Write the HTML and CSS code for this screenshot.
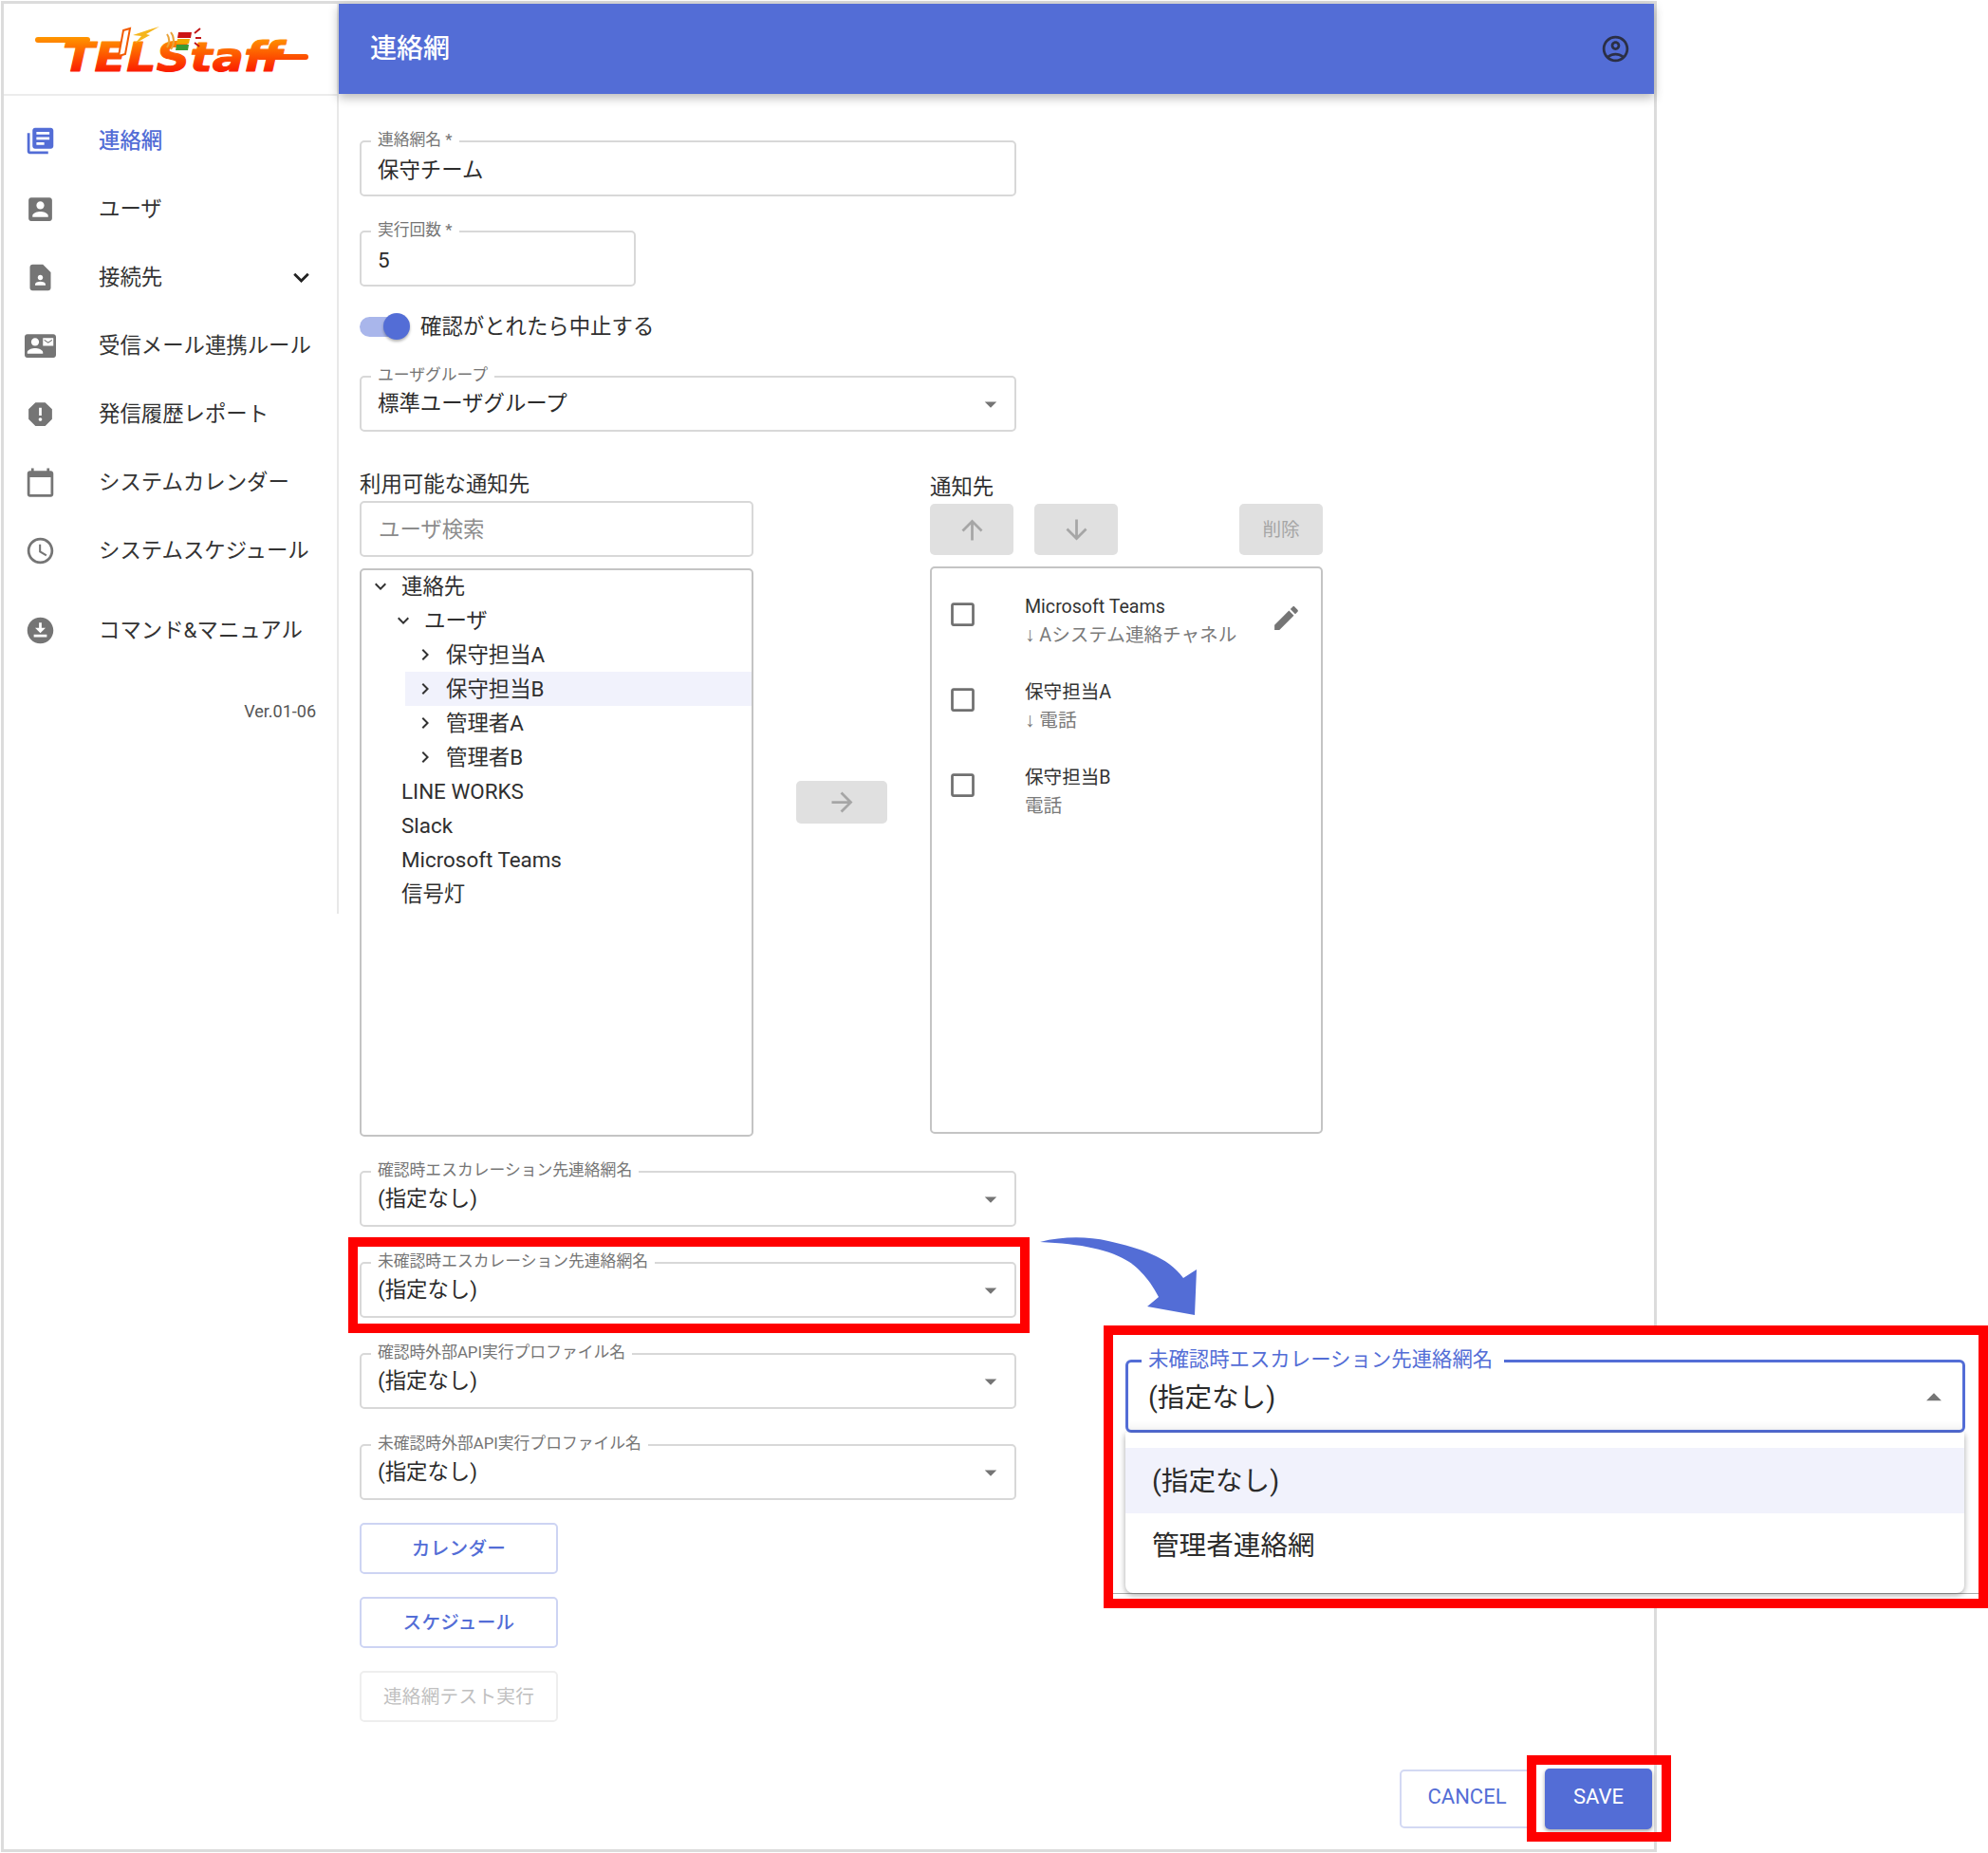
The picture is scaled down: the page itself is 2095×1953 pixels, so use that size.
FILE: index.html
```html
<!DOCTYPE html>
<html lang="ja">
<head>
<meta charset="utf-8">
<title>連絡網</title>
<link rel="stylesheet" href="styles.css">
</head>
<body>
<svg class="sprite" aria-hidden="true">
  <symbol id="i-drop" viewBox="0 0 24 24"><path d="M7 10l5 5 5-5z"/></symbol>
  <symbol id="i-dropup" viewBox="0 0 24 24"><path d="M7 14l5-5 5 5z"/></symbol>
  <symbol id="i-more" viewBox="0 0 24 24"><path d="M16.59 8.59L12 13.17 7.41 8.59 6 10l6 6 6-6z"/></symbol>
  <symbol id="i-right" viewBox="0 0 24 24"><path d="M10 6L8.59 7.41 13.17 12l-4.58 4.59L10 18l6-6z"/></symbol>
  <symbol id="i-check" viewBox="0 0 24 24"><path d="M19 5v14H5V5h14m0-2H5c-1.1 0-2 .9-2 2v14c0 1.1.9 2 2 2h14c1.1 0 2-.9 2-2V5c0-1.1-.9-2-2-2z"/></symbol>
</svg>

<div class="frame">
  <aside class="sidebar">
    <div class="logo-bar">
      <svg class="logo" viewBox="0 0 300 64" role="img" aria-label="TELStaff">
        <defs>
          <linearGradient id="logo-grad" gradientUnits="userSpaceOnUse" x1="0" y1="18" x2="0" y2="58">
            <stop offset="0" stop-color="#ff9a00"/>
            <stop offset="1" stop-color="#fb1400"/>
          </linearGradient>
        </defs>
        <path d="M10 22H62" class="logo-line"/>
        <path d="M243 40H292" class="logo-line"/>
        <text x="36" y="55" class="logo-text" textLength="232" lengthAdjust="spacingAndGlyphs">TELStaff</text>
        <path d="M100 12l7-2-5 27-7 2z" class="logo-phone"/>
        <path d="M110 17l18-6 10-3-14 8 4 1-16 9 7-8z" class="logo-bolt"/>
        <path d="M146 16c3 4 3 10 0 14M150 14c4 5 4 13 0 18" class="logo-wave"/>
        <path d="M158 14h14l-1 6h-14z" class="logo-red"/>
        <path d="M157 21h13l-1 5h-13z" class="logo-yellow"/>
        <path d="M156 27h13l-1 6h-13z" class="logo-green"/>
        <path d="M175 15l6-5M176 20h6M175 25l5 4" class="logo-ray"/>
      </svg>
    </div>
    <nav class="nav">
      <a class="nav-item is-active">
        <svg class="nav-icon" viewBox="0 0 24 24"><path d="M4 6H2v14c0 1.1.9 2 2 2h14v-2H4V6zm16-4H8c-1.1 0-2 .9-2 2v12c0 1.1.9 2 2 2h12c1.1 0 2-.9 2-2V4c0-1.1-.9-2-2-2zm-1 9H9V9h10v2zm-4 4H9v-2h6v2zm4-8H9V5h10v2z"/></svg>
        <span class="nudge">連絡網</span>
      </a>
      <a class="nav-item">
        <svg class="nav-icon" viewBox="0 0 24 24"><path d="M3 5v14c0 1.1.89 2 2 2h14c1.1 0 2-.9 2-2V5c0-1.1-.9-2-2-2H5c-1.11 0-2 .9-2 2zm12 4c0 1.66-1.34 3-3 3s-3-1.34-3-3 1.34-3 3-3 3 1.34 3 3zm-9 8c0-2 4-3.1 6-3.1s6 1.1 6 3.1v1H6v-1z"/></svg>
        <span class="nudge">ユーザ</span>
      </a>
      <a class="nav-item">
        <svg class="nav-icon" viewBox="0 0 24 24"><path d="M14 2H6c-1.1 0-2 .9-2 2v16c0 1.1.89 2 1.99 2H18c1.1 0 2-.9 2-2V8l-6-6zm-2 8c1.1 0 2 .9 2 2s-.9 2-2 2-2-.9-2-2 .9-2 2-2zm4 8H8v-.57c0-.81.48-1.53 1.22-1.85.85-.37 1.79-.58 2.78-.58.99 0 1.93.21 2.78.58.74.32 1.22 1.04 1.22 1.85V18z"/></svg>
        <span class="nudge">接続先</span>
        <svg class="nav-caret"><use href="#i-more"/></svg>
      </a>
      <a class="nav-item">
        <svg class="nav-icon" viewBox="0 0 24 24"><path d="M21 8V7l-3 2-3-2v1l3 2 3-2zm1-5H2C.9 3 0 3.9 0 5v14c0 1.1.9 2 2 2h20c1.1 0 1.99-.9 1.99-2L24 5c0-1.1-.9-2-2-2zM8 6c1.66 0 3 1.34 3 3s-1.34 3-3 3-3-1.34-3-3 1.34-3 3-3zm6 12H2v-1c0-2 4-3.1 6-3.1s6 1.1 6 3.1v1zm8-6h-8V6h8v6z"/></svg>
        <span class="nudge">受信メール連携ルール</span>
      </a>
      <a class="nav-item">
        <svg class="nav-icon" viewBox="0 0 24 24"><path d="M15.73 3H8.27L3 8.27v7.46L8.27 21h7.46L21 15.73V8.27L15.73 3zM12 17.3c-.72 0-1.3-.58-1.3-1.3 0-.72.58-1.3 1.3-1.3.72 0 1.3.58 1.3 1.3 0 .72-.58 1.3-1.3 1.3zm1-4.3h-2V7h2v6z"/></svg>
        <span class="nudge">発信履歴レポート</span>
      </a>
      <a class="nav-item">
        <svg class="nav-icon" viewBox="0 0 24 24"><path d="M20 3h-1V1h-2v2H7V1H5v2H4c-1.1 0-2 .9-2 2v16c0 1.1.9 2 2 2h16c1.1 0 2-.9 2-2V5c0-1.1-.9-2-2-2zm0 18H4V8h16v13z"/></svg>
        <span class="nudge">システムカレンダー</span>
      </a>
      <a class="nav-item">
        <svg class="nav-icon" viewBox="0 0 24 24"><path d="M11.99 2C6.47 2 2 6.48 2 12s4.47 10 9.99 10C17.52 22 22 17.52 22 12S17.52 2 11.99 2zM12 20c-4.42 0-8-3.58-8-8s3.58-8 8-8 8 3.58 8 8-3.58 8-8 8zm.5-13H11v6l5.25 3.15.75-1.23-4.5-2.67z"/></svg>
        <span class="nudge">システムスケジュール</span>
      </a>
      <a class="nav-item nav-item-last">
        <svg class="nav-icon" viewBox="0 0 24 24"><path d="M12 2C6.49 2 2 6.49 2 12s4.49 10 10 10 10-4.49 10-10S17.51 2 12 2zm-1 8V6h2v4h3l-4 4-4-4h3zm6 7H7v-2h10v2z"/></svg>
        <span class="nudge">コマンド&amp;マニュアル</span>
      </a>
    </nav>
    <div class="version">Ver.01-06</div>
  </aside>

  <div class="main">
    <header class="appbar">
      <h1 class="appbar-title nudge">連絡網</h1>
      <svg class="appbar-icon" viewBox="0 0 24 24"><path d="M12 2C6.48 2 2 6.48 2 12s4.48 10 10 10 10-4.48 10-10S17.52 2 12 2zM7.35 18.5C8.66 17.56 10.26 17 12 17s3.34.56 4.65 1.5c-1.31.94-2.91 1.5-4.65 1.5s-3.34-.56-4.65-1.5zm10.79-1.38C16.45 15.8 14.32 15 12 15s-4.45.8-6.14 2.12C4.7 15.73 4 13.95 4 12c0-4.42 3.58-8 8-8s8 3.58 8 8c0 1.95-.7 3.73-1.86 5.12z"/><path d="M12 6c-1.93 0-3.5 1.57-3.5 3.5S10.07 13 12 13s3.5-1.57 3.5-3.5S13.93 6 12 6zm0 5c-.83 0-1.5-.67-1.5-1.5S11.17 8 12 8s1.5.67 1.5 1.5S12.83 11 12 11z"/></svg>
    </header>

    <form class="form">
      <div class="field field-text">
        <span class="field-label">連絡網名 *</span>
        <span class="field-value nudge">保守チーム</span>
      </div>
      <div class="field field-text field-short">
        <span class="field-label">実行回数 *</span>
        <span class="field-value">5</span>
      </div>
      <div class="switch-row">
        <span class="switch"><span class="switch-thumb"></span></span>
        <span class="nudge">確認がとれたら中止する</span>
      </div>
      <div class="field field-group">
        <span class="field-label">ユーザグループ</span>
        <span class="field-value nudge">標準ユーザグループ</span>
        <svg class="drop"><use href="#i-drop"/></svg>
      </div>

      <div class="transfer">
        <section class="transfer-col transfer-left">
          <h2 class="col-title">利用可能な通知先</h2>
          <div class="field search"><span class="placeholder nudge">ユーザ検索</span></div>
          <div class="tree">
            <ul class="tree-list tree-root">
              <li><div class="tree-row"><svg class="tree-caret"><use href="#i-more"/></svg><span class="nudge">連絡先</span></div>
                <ul class="tree-list tree-l1">
                  <li><div class="tree-row"><svg class="tree-caret"><use href="#i-more"/></svg><span class="nudge">ユーザ</span></div>
                    <ul class="tree-list tree-l2">
                      <li><div class="tree-row"><svg class="tree-caret"><use href="#i-right"/></svg><span class="nudge">保守担当A</span></div></li>
                      <li><div class="tree-row is-selected"><svg class="tree-caret"><use href="#i-right"/></svg><span class="nudge">保守担当B</span></div></li>
                      <li><div class="tree-row"><svg class="tree-caret"><use href="#i-right"/></svg><span class="nudge">管理者A</span></div></li>
                      <li><div class="tree-row"><svg class="tree-caret"><use href="#i-right"/></svg><span class="nudge">管理者B</span></div></li>
                    </ul>
                  </li>
                </ul>
              </li>
              <li><div class="tree-row tree-leaf"><span>LINE WORKS</span></div></li>
              <li><div class="tree-row tree-leaf"><span>Slack</span></div></li>
              <li><div class="tree-row tree-leaf"><span>Microsoft Teams</span></div></li>
              <li><div class="tree-row tree-leaf"><span class="nudge">信号灯</span></div></li>
            </ul>
          </div>
        </section>

        <div class="transfer-mid">
          <button type="button" class="btn-grey btn-move"><svg viewBox="0 0 24 24"><path d="M12 4l-1.41 1.41L16.17 11H4v2h12.17l-5.58 5.59L12 20l8-8z"/></svg></button>
        </div>

        <section class="transfer-col transfer-right">
          <h2 class="col-title">通知先</h2>
          <div class="order-bar">
            <button type="button" class="btn-grey"><svg viewBox="0 0 24 24"><path d="M4 12l1.41 1.41L11 7.83V20h2V7.83l5.58 5.59L20 12l-8-8-8 8z"/></svg></button>
            <button type="button" class="btn-grey"><svg viewBox="0 0 24 24"><path d="M20 12l-1.41-1.41L13 16.17V4h-2v12.17l-5.58-5.59L4 12l8 8 8-8z"/></svg></button>
            <button type="button" class="btn-grey btn-delete">削除</button>
          </div>
          <ul class="dest-list">
            <li class="dest-row">
              <svg class="dest-check"><use href="#i-check"/></svg>
              <div class="dest-text"><div class="dest-main">Microsoft Teams</div><div class="dest-sub"><span class="dest-down">↓</span> Aシステム連絡チャネル</div></div>
              <svg class="dest-edit" viewBox="0 0 24 24"><path d="M3 17.25V21h3.75L17.81 9.94l-3.75-3.75L3 17.25zM20.71 7.04c.39-.39.39-1.02 0-1.41l-2.34-2.34c-.39-.39-1.02-.39-1.41 0l-1.83 1.83 3.75 3.75 1.83-1.83z"/></svg>
            </li>
            <li class="dest-row">
              <svg class="dest-check"><use href="#i-check"/></svg>
              <div class="dest-text"><div class="dest-main">保守担当A</div><div class="dest-sub"><span class="dest-down">↓</span> 電話</div></div>
            </li>
            <li class="dest-row">
              <svg class="dest-check"><use href="#i-check"/></svg>
              <div class="dest-text"><div class="dest-main">保守担当B</div><div class="dest-sub">電話</div></div>
            </li>
          </ul>
        </section>
      </div>

      <div class="select-stack">
        <div class="field"><span class="field-label">確認時エスカレーション先連絡網名</span><span class="field-value nudge">(指定なし)</span><svg class="drop"><use href="#i-drop"/></svg></div>
        <div class="field"><span class="field-label">未確認時エスカレーション先連絡網名</span><span class="field-value nudge">(指定なし)</span><svg class="drop"><use href="#i-drop"/></svg></div>
        <div class="field"><span class="field-label">確認時外部API実行プロファイル名</span><span class="field-value nudge">(指定なし)</span><svg class="drop"><use href="#i-drop"/></svg></div>
        <div class="field"><span class="field-label">未確認時外部API実行プロファイル名</span><span class="field-value nudge">(指定なし)</span><svg class="drop"><use href="#i-drop"/></svg></div>
      </div>

      <div class="action-stack">
        <button type="button" class="btn-outline">カレンダー</button>
        <button type="button" class="btn-outline">スケジュール</button>
        <button type="button" class="btn-outline is-disabled">連絡網テスト実行</button>
      </div>

      <div class="footer">
        <button type="button" class="btn-cancel">CANCEL</button>
        <button type="button" class="btn-save">SAVE</button>
      </div>
    </form>
  </div>
</div>

<!-- annotations laid over the screenshot -->
<div class="mark mark-select"></div>
<div class="mark mark-save"></div>
<svg class="callout-arrow" viewBox="0 0 175 90" aria-hidden="true">
  <path d="M6 9C30 3 55 3 78 8 112 16 140 24 157 47L171 38 169 86 119 77 131 67C120 45 105 33 100 30 80 17 50 11 6 9z"/>
</svg>
<div class="popup">
  <div class="popup-field">
    <span class="popup-label">未確認時エスカレーション先連絡網名</span>
    <span class="popup-value nudge">(指定なし)</span>
    <svg class="popup-drop"><use href="#i-dropup"/></svg>
  </div>
  <ul class="popup-menu">
    <li class="popup-item is-selected"><span class="nudge">(指定なし)</span></li>
    <li class="popup-item"><span class="nudge">管理者連絡網</span></li>
  </ul>
  <div class="popup-cut"></div>
</div>
</body>
</html>
```

FILE: styles.css
```css
* { box-sizing: border-box; }
html, body { margin: 0; }
body {
  width: 2095px;
  height: 1953px;
  padding: 1px 0 0 1px;
  position: relative;
  overflow: hidden;
  background: #fff;
  font-family: Roboto, "Noto Sans CJK JP", sans-serif;
  font-size: 22.4px;
  color: #2f2f2f;
}
ul { list-style: none; margin: 0; padding: 0; }
h1, h2 { margin: 0; font-weight: 400; }
button { font-family: inherit; margin: 0; padding: 0; cursor: default; }
.sprite { display: none; }

/* lifts CJK text inside a vertically centred row */
.nudge { padding-bottom: 5px; }

.frame {
  width: 1745px;
  height: 1951px;
  border: 3px solid #dcdcdc;
  display: flex;
  align-items: flex-start;
}

/* sidebar */
.sidebar {
  width: 353px;
  height: 959px;
  flex: none;
  border-right: 2px solid #e8e8e8;
  display: flex;
  flex-direction: column;
}
.logo-bar {
  height: 97px;
  flex: none;
  border-bottom: 2px solid #ececec;
  display: flex;
  align-items: center;
  padding-left: 26px;
}
.logo { width: 300px; height: 64px; display: block; }
.logo-text {
  font-family: "DejaVu Sans", sans-serif;
  font-size: 42px;
  font-weight: 700;
  font-style: italic;
  fill: url(#logo-grad);
  stroke: url(#logo-grad);
  stroke-width: 1px;
  stroke-linejoin: round;
}
.logo-line { fill: none; stroke: url(#logo-grad); stroke-width: 6px; stroke-linecap: round; }
.logo-phone { fill: #fff; stroke: #f25a00; stroke-width: 2px; }
.logo-bolt { fill: #f5b61c; }
.logo-wave { fill: none; stroke: #e9a33a; stroke-width: 2px; }
.logo-red { fill: #cc1414; }
.logo-yellow { fill: #f2a900; }
.logo-green { fill: #3a9a35; }
.logo-ray { fill: none; stroke: #c21818; stroke-width: 2px; }

.nav { padding-top: 11px; display: flex; flex-direction: column; }
.nav-item {
  height: 72px;
  display: flex;
  align-items: center;
  padding: 0 21px 0 22px;
  color: #333;
}
.nav-item.is-active { color: #536dd6; font-weight: 500; }
.nav-item-last { margin-top: 12px; }
.nav-icon { width: 33px; height: 33px; flex: none; margin-right: 45px; fill: #757575; }
.is-active .nav-icon { fill: #536dd6; }
.nav-caret { width: 33px; height: 33px; margin-left: auto; fill: #222; }
.version {
  margin-top: 38px;
  padding-right: 22px;
  text-align: right;
  font-size: 18px;
  line-height: 24px;
  color: #555;
}

/* main column */
.main { flex: 1; min-width: 0; }
.appbar {
  height: 95px;
  background: #536dd6;
  display: flex;
  align-items: center;
  justify-content: space-between;
  padding: 0 24px 0 33px;
  box-shadow: 0 4px 10px rgba(0, 0, 0, .28);
  position: relative;
}
.appbar-title { font-size: 28px; font-weight: 500; color: #fff; }
.appbar-icon { width: 33px; height: 33px; fill: #2b2f45; }

.form { padding: 49px 0 0 22px; }

.field {
  position: relative;
  width: 692px;
  height: 59px;
  border: 2px solid #d8d8d8;
  border-radius: 5px;
  display: flex;
  align-items: center;
  padding: 0 10px 0 17px;
  background: #fff;
}
.field-text { padding-top: 4px; }
.field-short { width: 291px; margin-top: 36px; padding-top: 3px; }
.field-group { margin-top: 33px; }
.field-label {
  position: absolute;
  left: 10px;
  top: -13px;
  padding: 0 7px;
  background: #fff;
  font-size: 16.8px;
  line-height: 20px;
  color: #757575;
  white-space: nowrap;
}
.field-value { color: #2b2b2b; }
.drop { width: 30px; height: 30px; margin-left: auto; fill: #757575; flex: none; }

.switch-row {
  margin-top: 23px;
  height: 38px;
  display: flex;
  align-items: center;
  gap: 13px;
}
.switch {
  position: relative;
  width: 51px;
  height: 21px;
  border-radius: 11px;
  background: #a9b6eb;
}
.switch-thumb {
  position: absolute;
  right: -2px;
  top: -4px;
  width: 28px;
  height: 28px;
  border-radius: 50%;
  background: #536dd6;
  box-shadow: 0 2px 3px rgba(0, 0, 0, .3);
}

/* transfer list */
.transfer {
  width: 1015px;
  margin-top: 39px;
  display: flex;
  align-items: flex-start;
}
.transfer-col { width: 414px; flex: none; }
.transfer-left { width: 415px; }
.transfer-right { padding-top: 4px; }
.col-title { font-size: 22.4px; line-height: 30px; }
.transfer-left .col-title { line-height: 32px; }
.search { width: 100%; margin-top: 2px; padding-left: 18px; padding-top: 2px; }
.placeholder { color: #8c8c8c; }
.tree {
  height: 599px;
  margin-top: 12px;
  border: 2px solid #c4c4c4;
  border-radius: 5px;
  overflow: hidden;
}
.tree-root { margin: -1px 0 0 -1px; }
.tree-l1 { padding-left: 24px; }
.tree-l2 { padding-left: 23px; }
.tree-row { height: 36px; display: flex; align-items: center; padding-left: 43px; }
.tree-row.is-selected { background: #f1f2fc; }
.tree-row:not(.tree-leaf) { padding-left: 9px; }
.tree-caret { width: 24px; height: 24px; margin-right: 10px; fill: #333; flex: none; }

.transfer-mid { flex: 1; align-self: center; display: flex; justify-content: center; padding-bottom: 2px; }
.btn-grey {
  width: 88px;
  height: 54px;
  border: 0;
  border-radius: 5px;
  background: #e0e0e0;
  color: #a6a6a6;
  font-size: 19.6px;
  display: flex;
  align-items: center;
  justify-content: center;
}
.btn-grey svg { width: 33px; height: 33px; fill: #a6a6a6; }
.btn-move { width: 96px; height: 45px; }
.btn-delete { margin-left: auto; padding-bottom: 3px; }
.order-bar { display: flex; gap: 22px; margin-top: 3px; }
.dest-list {
  height: 598px;
  margin-top: 12px;
  border: 2px solid #c4c4c4;
  border-radius: 5px;
  padding: 10px 20px 0 16px;
}
.dest-row { height: 90px; display: flex; align-items: flex-start; }
.dest-check { width: 33px; height: 33px; margin: 22px 49px 0 0; fill: #707070; flex: none; }
.dest-text { padding-top: 16px; font-size: 19.6px; line-height: 30px; }
.dest-main { color: #333; }
.dest-sub { color: #7a7a7a; }
.dest-down { font-family: "Liberation Serif", serif; font-size: 21px; line-height: 20px; }
.dest-edit { width: 33px; height: 33px; margin: 26px 0 0 auto; fill: #757575; flex: none; }

.select-stack { margin-top: 36px; display: flex; flex-direction: column; gap: 37px; }

.action-stack { margin-top: 24px; display: flex; flex-direction: column; gap: 24px; width: 209px; }
.btn-outline {
  height: 54px;
  border: 2px solid #cdd4f3;
  border-radius: 5px;
  background: #fff;
  color: #536dd6;
  font-size: 19.6px;
  font-weight: 500;
  letter-spacing: .3px;
  padding-bottom: 3px;
}
.btn-outline.is-disabled { border-color: #eeeeee; color: #c0c0c0; font-weight: 400; }

.footer { margin-top: 49px; display: flex; justify-content: flex-end; align-items: center; gap: 11px; padding-right: 2px; }
.btn-cancel {
  width: 142px;
  height: 62px;
  border: 2px solid #d3d9f3;
  border-radius: 5px;
  background: #fff;
  color: #536dd6;
  font-size: 22px;
  padding-bottom: 5px;
}
.btn-save {
  width: 113px;
  height: 64px;
  border: 0;
  border-radius: 5px;
  background: #536dd6;
  color: #fff;
  font-size: 22px;
  padding-bottom: 5px;
  box-shadow: 0 2px 4px rgba(0, 0, 0, .35);
}

/* annotations */
.mark { position: absolute; border: 10px solid #ff0000; }
.mark-select { left: 367px; top: 1304px; width: 718px; height: 101px; }
.mark-save { left: 1609px; top: 1850px; width: 152px; height: 91px; }
.callout-arrow { position: absolute; left: 1090px; top: 1300px; width: 175px; height: 90px; fill: #536dd6; }

.popup {
  position: absolute;
  left: 1163px;
  top: 1397px;
  width: 932px;
  height: 298px;
  border: 10px solid #ff0000;
  background: #fff;
  padding: 26px 0 0 13px;
}
.popup-field {
  position: relative;
  width: 885px;
  height: 77px;
  border: 3px solid #536dd6;
  border-radius: 6px;
  display: flex;
  align-items: center;
  padding: 3px 11px 0 21px;
  box-shadow: inset 0 -12px 10px -10px rgba(0, 0, 0, .07);
}
.popup-label {
  position: absolute;
  left: 14px;
  top: -16px;
  padding: 0 12px 0 7px;
  background: #fff;
  color: #536dd6;
  font-size: 21.4px;
  line-height: 26px;
  white-space: nowrap;
}
.popup-value { font-size: 28.6px; color: #2b2b2b; }
.popup-drop { width: 38px; height: 38px; margin-left: auto; fill: #757575; flex: none; }
.popup-menu {
  position: relative;
  z-index: 1;
  width: 884px;
  height: 169px;
  padding: 16px 0;
  background: #fff;
  border-radius: 0 0 8px 8px;
  box-shadow: 0 2px 6px rgba(0, 0, 0, .35);
}
.popup-item {
  height: 68px;
  display: flex;
  align-items: center;
  padding-left: 28px;
  font-size: 28.6px;
  color: #2b2b2b;
}
.popup-item.is-selected { height: 69px; background: #f1f2fc; }
.popup-cut { height: 1px; margin-left: -13px; background: #a8a8a8; }
```
